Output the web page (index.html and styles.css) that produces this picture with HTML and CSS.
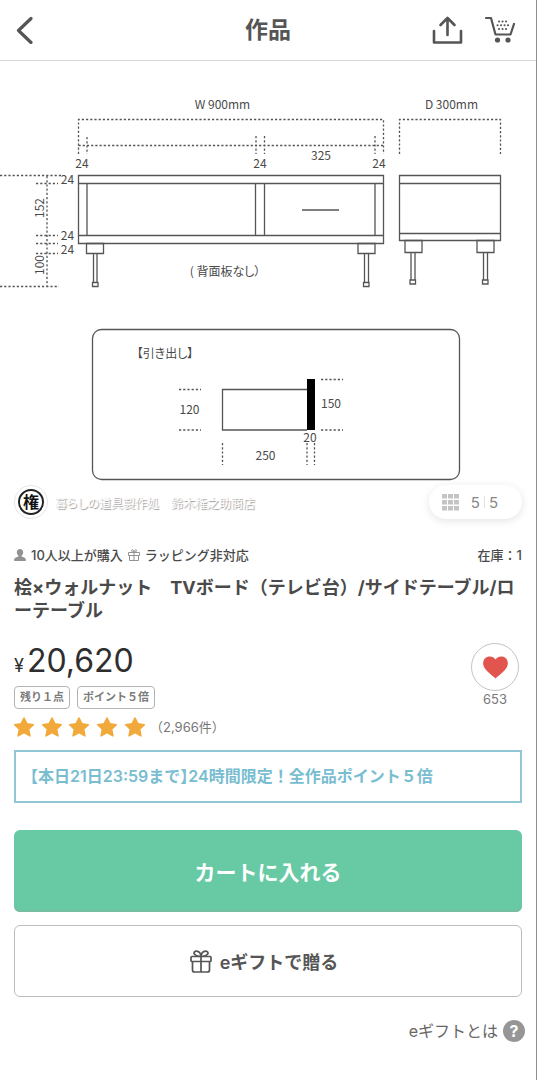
FILE: index.html
```html
<!DOCTYPE html>
<html lang="ja">
<head>
<meta charset="utf-8">
<meta name="viewport" content="width=device-width, initial-scale=1">
<title>作品</title>
<link rel="stylesheet" href="styles.css">
</head>
<body>
<div class="page">
  <header class="header">
    <div class="header-side header-back">
      <button class="icon-button" aria-label="戻る">
        <svg class="icon-back" viewBox="0 0 18 28" fill="none" stroke="#555" stroke-width="3.200" stroke-linecap="round" stroke-linejoin="round"><path d="M15 2.500 2.500 14.500l12.500 12"/></svg>
      </button>
    </div>
    <h1 class="header-title">作品</h1>
    <div class="header-side header-actions">
      <button class="icon-button" aria-label="共有">
        <svg class="icon-share" viewBox="0 0 32 30" fill="none" stroke="#555" stroke-width="2.600" stroke-linecap="round" stroke-linejoin="round"><path d="M2 16v11.500h27V16M15.500 20V3M8.500 10l7-7 7 7"/></svg>
      </button>
      <button class="icon-button" aria-label="カート">
        <svg class="icon-cart" viewBox="0 0 32 30" fill="none" stroke="#555" stroke-width="2.200" stroke-linecap="round" stroke-linejoin="round"><path d="M2 3h5l4.500 16.500h15L30 9"/><g stroke="none" fill="#555"><circle cx="13.500" cy="25" r="2.600"/><circle cx="24" cy="25" r="2.600"/></g><path stroke-width="2" stroke-dasharray=".1 3.400" d="M15 6.500h8M13.500 10.200h12M15 14h8"/></svg>
      </button>
    </div>
  </header>

  <main>
    <section class="gallery">
      <svg class="drawing" viewBox="0 61 536 466" role="img" aria-label="寸法図">
        <g class="line">
          <path d="M78.500 175.500h305v68h-305zM78.500 183.500h305M78.500 235.500h305M87 183.500v52M255.500 183.500v52M264.500 183.500v52M375 183.500v52M302 210h37"/>
          <path d="M399.500 175.500h101v65h-101zM399.500 183.500h101M399.500 233.500h101"/>
          <path d="M86.500 243.500h17v10h-17zM358 243.500h17v10h-17zM405 240.500h17v12h-17zM477 240.500h17v12h-17z"/>
          <path d="M93.500 253.500v29M97 253.500v29M92.500 282.500h5.500v4h-5.500zM364.500 253.500v29M368.500 253.500v29M363.500 282.500h5.500v4h-5.500zM411 252.500v28M415 252.500v28M410 280h5.500v4h-5.500zM483.500 252.500v28M487.500 252.500v28M482.500 280h5.500v4h-5.500z"/>
          <rect x="92.500" y="329.500" width="367" height="150" rx="9"/>
          <path d="M307 389.500h-84.500v40.500H307"/>
        </g>
        <path fill="#000" d="M307 379h8v51h-8z"/>
        <g class="dash">
          <path d="M78.500 154V119.500h305V154M78.500 145.500h305M87 137v17M256 136v18M264.500 136v18M375 136v18M399.500 154v-34.500h101V154"/>
          <path d="M0 175.500h63M36 183.500h22M36 235.500h22M36 243.500h22M36 253.500h22M0 286.500h59M47 176v110"/>
          <path d="M179 389.500h22M179 430h22M321 379.500h22M321 430h22M222.500 443v22M307 443v22M314.500 443v22"/>
        </g>
        <g class="label">
          <text x="222.500" y="109">W 900mm</text>
          <text x="451.500" y="109">D 300mm</text>
          <text x="82" y="168">24</text>
          <text x="260" y="168">24</text>
          <text x="379" y="168">24</text>
          <text x="321" y="160">325</text>
          <text x="67.500" y="184">24</text>
          <text x="67.500" y="240">24</text>
          <text x="67.500" y="254">24</text>
          <text transform="translate(43.500 208) rotate(-90)">152</text>
          <text transform="translate(43.500 265) rotate(-90)">100</text>
          <text class="kana" x="225" y="276">( 背面板なし）</text>
          <text class="kana" x="165" y="358">【引き出し】</text>
          <text x="189.500" y="414">120</text>
          <text x="331" y="408">150</text>
          <text x="310" y="442">20</text>
          <text x="265.500" y="460">250</text>
        </g>
      </svg>
      <div class="gallery-bar">
        <a class="shop" href="#shop">
          <span class="shop-mark">権</span>
          <span class="shop-name">暮らしの道具製作処　鈴木権之助商店</span>
        </a>
        <button class="counter" aria-label="画像一覧 5 / 5">
          <svg class="icon-grid" viewBox="0 0 17 17" fill="#c4c4c4"><path d="M0 0h5v4.500H0zM6 0h5v4.500H6zM12 0h5v4.500h-5zM0 6h5v4.500H0zM6 6h5v4.500H6zM12 6h5v4.500h-5zM0 12h5v4.500H0zM6 12h5v4.500H6zM12 12h5v4.500h-5z"/></svg>
          <span>5</span><span class="divider"></span><span>5</span>
        </button>
      </div>
    </section>

    <section class="product">
      <div class="facts">
        <svg class="icon-fact" viewBox="0 0 12 12" fill="#929292"><path d="M6 0c2 0 3.200 1.400 3.200 3.200 0 1.500-.7 2.600-1.600 3.400v.9c1.500.5 4.100 1.100 4.400 3.300 0 .8-.4 1.200-1 1.200H1c-.6 0-1-.4-1-1.200.3-2.200 2.900-2.800 4.400-3.300v-.9C3.500 5.800 2.800 4.700 2.800 3.200 2.800 1.400 4 0 6 0z"/></svg>
        <span>10人以上が購入</span>
        <svg class="icon-fact" viewBox="0 0 12 12" fill="none" stroke="#929292"><path d="M.5 3.500h11v3H.5zM1.500 6.500v5h9v-5M6 3.500v8M6 3.300C4.500 3.300 3 2.300 3.500 1.200S6 1.200 6 3.300c0-2.100 2-3.200 2.500-2.100S7.500 3.300 6 3.300z"/></svg>
        <span>ラッピング非対応</span>
        <span class="stock">在庫：1</span>
      </div>
      <h2 class="name">桧×ウォルナット　TVボード（テレビ台）/サイドテーブル/ローテーブル</h2>

      <div class="summary">
        <div class="summary-main">
          <p class="price"><span class="yen">¥</span>20,620</p>
          <div class="tags"><span class="tag">残り１点</span><span class="tag">ポイント５倍</span></div>
          <div class="rating">
            <svg class="stars" viewBox="0 0 132 20" fill="#f2a93b" role="img" aria-label="星5つ">
              <defs><path id="star" stroke="#f2a93b" stroke-width="1.600" stroke-linejoin="round" d="m10 1 2.900 5.800 6.400.9-4.700 4.400 1.300 6.700-5.900-3.200-5.900 3.200 1.300-6.700L.7 7.700l6.400-.9z"/></defs>
              <use href="#star"/><use href="#star" x="28"/><use href="#star" x="55"/><use href="#star" x="83"/><use href="#star" x="111"/>
            </svg>
            <a class="reviews" href="#reviews">（2,966件）</a>
          </div>
        </div>
        <div class="like">
          <button class="like-button" aria-label="お気に入り">
            <svg class="icon-heart" viewBox="0 0 25 23" fill="#e2554f"><path d="M12.500 22.500C9 19 1 14.500.2 8.300-.3 3.500 3 .5 6.700.5c2.500 0 4.500 1 5.800 3 1.300-2 3.300-3 5.800-3 3.700 0 7 3 6.500 7.800-.8 6.200-8.800 10.700-12.300 14.200z"/></svg>
          </button>
          <span class="like-count">653</span>
        </div>
      </div>

      <a class="notice" href="#campaign">【本日21日23:59まで<span class="half">】</span>24時間限定！全作品ポイント５倍</a>
      <button class="cart-button">カートに入れる</button>
      <button class="gift-button">
        <svg class="icon-gift" viewBox="0 0 22 23" fill="none" stroke="#555" stroke-width="1.700" stroke-linejoin="round"><rect x="1" y="6.500" width="20" height="5" rx="1"/><path d="M2.500 11.500v8.500q0 2 2 2h13q2 0 2-2v-8.500M11 6.500V22M11 6.500C8 6.500 3.500 5 4 2.800 4.800 0 10.500.5 11 6.500c.5-6 6.200-6.500 7-3.700.5 2.200-4 3.700-7 3.700z"/></svg>
        <span>eギフトで贈る</span>
      </button>
      <a class="help" href="#egift"><span>eギフトとは</span><span class="help-mark">?</span></a>
    </section>
  </main>
</div>
</body>
</html>
```
FILE: styles.css
```css
* {
  box-sizing: border-box;
}

body {
  margin: 0;
  background: #fff;
  color: #4a4a4a;
  font-family: Inter, "Noto Sans CJK JP", sans-serif;
}

button {
  margin: 0;
  padding: 0;
  border: 0;
  background: none;
  color: inherit;
  font: inherit;
  cursor: pointer;
}

a {
  color: inherit;
  text-decoration: none;
}

h1,
h2,
p {
  margin: 0;
}

svg {
  display: block;
  flex: none;
}

.page {
  min-height: 100vh;
  border-right: 1px solid #8e8e8e;
}

.header {
  display: grid;
  grid-template-columns: 1fr auto 1fr;
  align-items: center;
  height: 61px;
  padding: 0 20px;
  border-bottom: 1px solid #d8d8d8;
}

.header-side {
  display: flex;
}

.header-back {
  margin-left: -4px;
}

.header-actions {
  justify-content: flex-end;
  gap: 20px;
}

.header-title {
  color: #555;
  font-size: 23px;
  line-height: 32px;
}

.icon-back {
  width: 18px;
  height: 28px;
}

.icon-share,
.icon-cart {
  width: 32px;
  height: 30px;
}

.gallery {
  position: relative;
}

.drawing {
  width: 100%;
  height: auto;
}

.line {
  fill: none;
  stroke: #555;
  stroke-width: 1.3;
}

.dash {
  fill: none;
  stroke: #555;
  stroke-width: 1.3;
  stroke-dasharray: 2.200 2;
}

.label {
  fill: #4a4a4a;
  font-family: "Noto Sans CJK JP", sans-serif;
  font-size: 12px;
  text-anchor: middle;
}

.kana {
  font-feature-settings: "palt";
}

.gallery-bar {
  position: absolute;
  right: 14px;
  bottom: 8px;
  left: 14px;
  display: flex;
  align-items: center;
  justify-content: space-between;
}

.shop {
  display: flex;
  align-items: center;
  gap: 7px;
}

.shop-mark {
  display: grid;
  place-items: center;
  width: 26px;
  height: 26px;
  margin: 4px;
  border: 2px solid #222;
  border-radius: 50%;
  outline: 1px solid #e6e6e6;
  outline-offset: 3px;
  color: #111;
  font-size: 16px;
  font-weight: 700;
  line-height: 20px;
}

.shop-name {
  color: #fff;
  font-size: 12px;
  font-feature-settings: "palt";
  text-shadow: 1px 1px 1px #999;
}

.counter {
  display: flex;
  align-items: center;
  height: 34px;
  padding: 0 24px 0 13px;
  border-radius: 17px;
  background: #fff;
  box-shadow: 0 2px 8px #0000001c;
  color: #888;
  font-size: 15px;
}

.icon-grid {
  width: 17px;
  height: 17px;
  margin-right: 12px;
}

.divider {
  width: 1px;
  height: 12px;
  margin: 0 4px;
  background: #e2e2e2;
}

.product {
  display: flex;
  flex-direction: column;
  padding: 18px 14px 36px;
}

.facts {
  display: flex;
  align-items: center;
  gap: 5px;
  font-size: 13px;
  font-weight: 500;
  line-height: 20px;
}

.icon-fact {
  width: 12px;
  height: 12px;
}

.stock {
  margin-left: auto;
}

.name {
  margin-top: 11px;
  font-size: 18px;
  font-weight: 700;
  line-height: 23px;
}

.summary {
  display: flex;
  justify-content: space-between;
  margin-top: 21px;
}

.price {
  color: #2e2e2e;
  font-size: 32px;
  line-height: 36px;
}

.yen {
  margin-right: 3px;
  font-size: 18px;
}

.tags {
  display: flex;
  gap: 7px;
  margin-top: 2px;
}

.tag {
  padding: 0 5px;
  border: 1px solid #b4b4b4;
  border-radius: 4px;
  color: #7c7c7c;
  font-size: 11px;
  font-weight: 700;
  line-height: 21px;
}

.rating {
  display: flex;
  align-items: center;
  gap: 4px;
  margin-top: 6px;
}

.stars {
  width: 132px;
  height: 20px;
}

.reviews {
  color: #777;
  font-size: 13px;
  line-height: 24px;
}

.like {
  display: flex;
  flex-direction: column;
  align-items: center;
  margin-right: 3px;
}

.like-button {
  display: grid;
  place-items: center;
  width: 48px;
  height: 48px;
  border: 1px solid #c4c4c4;
  border-radius: 50%;
}

.icon-heart {
  width: 25px;
  height: 23px;
}

.like-count {
  color: #777;
  font-size: 13px;
  line-height: 16px;
}

.notice {
  margin-top: 11px;
  padding: 14px 6px;
  border: 2px solid #93c6d4;
  color: #79bdd0;
  font-size: 16px;
  font-weight: 600;
  line-height: 21px;
}

.half {
  font-feature-settings: "halt";
}

.cart-button {
  height: 82px;
  margin-top: 27px;
  border-radius: 6px;
  background: #68c9a5;
  box-shadow: inset 0 -2px 0 #76bea3;
  color: #fff;
  font-size: 21px;
  font-weight: 700;
}

.gift-button {
  display: flex;
  align-items: center;
  justify-content: center;
  gap: 8px;
  height: 72px;
  margin-top: 13px;
  padding-right: 8px;
  border: 1px solid #bcbcbc;
  border-radius: 6px;
  color: #555;
  font-size: 18px;
  font-weight: 600;
}

.icon-gift {
  width: 22px;
  height: 23px;
}

.help {
  display: flex;
  align-items: center;
  align-self: flex-end;
  gap: 5px;
  margin-top: 22px;
  margin-right: -3px;
  color: #666;
  font-size: 16px;
  line-height: 24px;
}

.help-mark {
  width: 22px;
  height: 22px;
  border-radius: 50%;
  background: #969696;
  color: #fff;
  font-weight: 700;
  line-height: 22px;
  text-align: center;
}
```
